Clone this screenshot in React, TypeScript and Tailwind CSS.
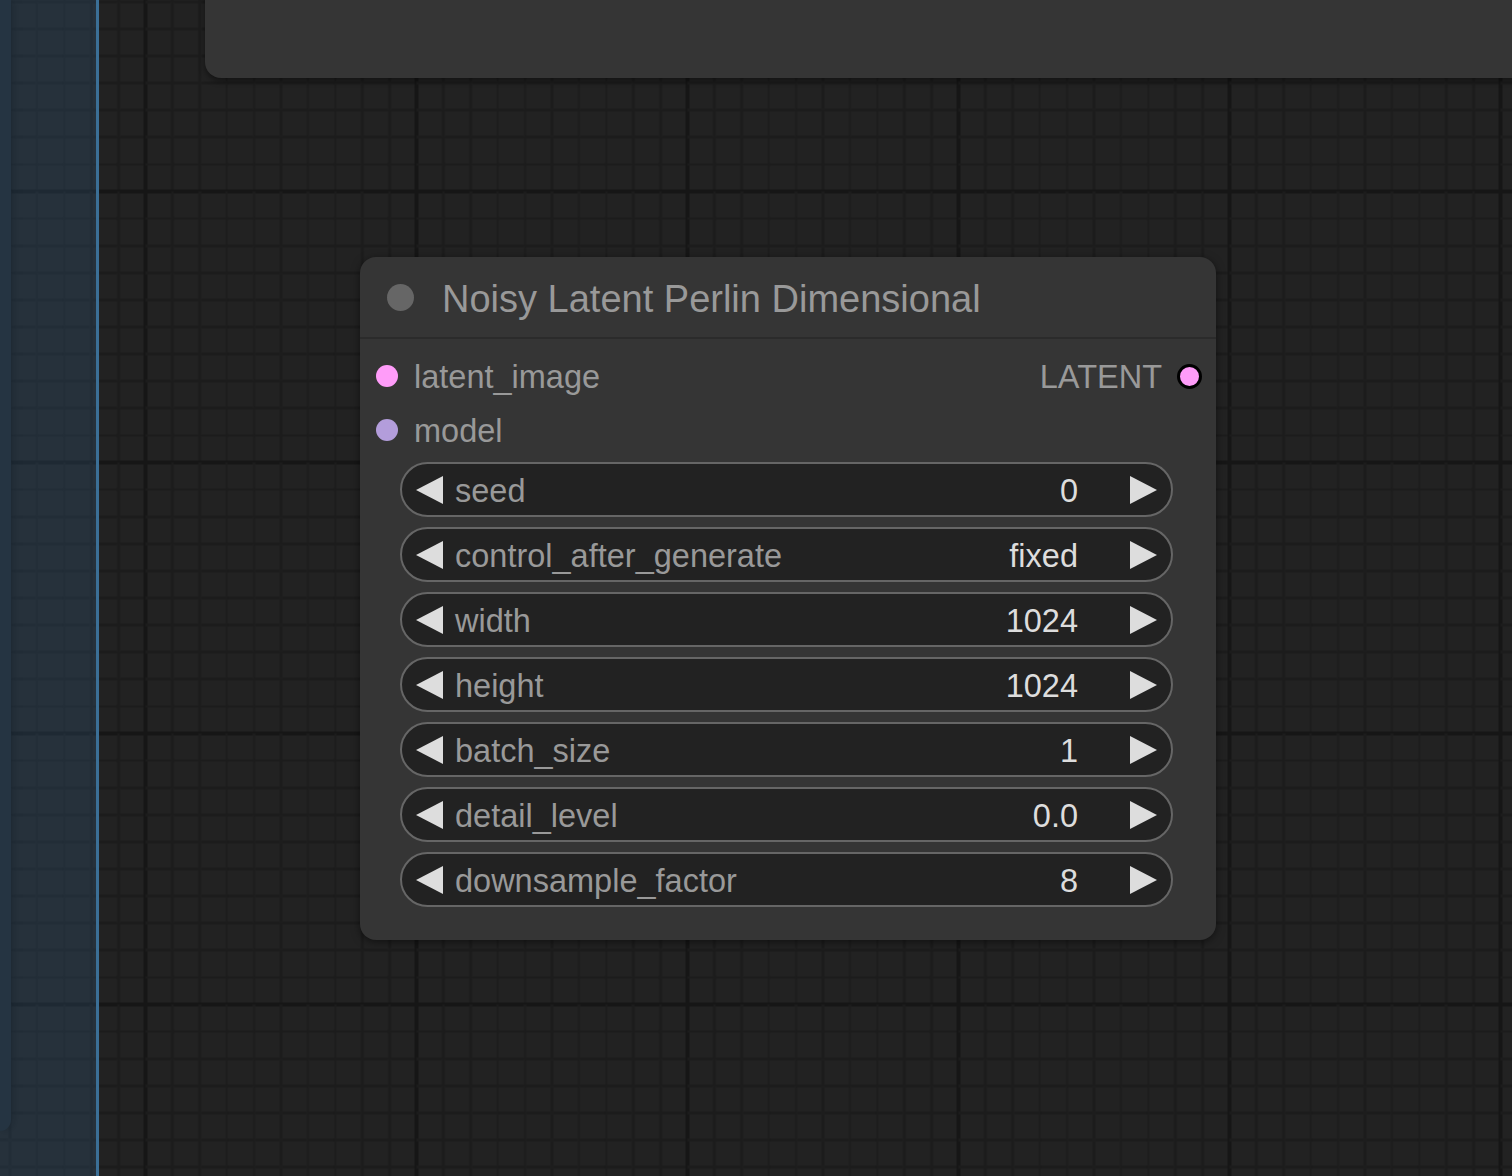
import React from "react";

const font = { fontFamily: '"Liberation Sans", Arial, sans-serif' };

type Widget = { label: string; value: string };

const widgets: Widget[] = [
  { label: "seed", value: "0" },
  { label: "control_after_generate", value: "fixed" },
  { label: "width", value: "1024" },
  { label: "height", value: "1024" },
  { label: "batch_size", value: "1" },
  { label: "detail_level", value: "0.0" },
  { label: "downsample_factor", value: "8" },
];

// canvas background grid (minor every ~27px, major every 10 cells)
const Grid = () => (
  <svg className="absolute inset-0" width="1512" height="1176">
    <defs>
      <filter id="soft">
        <feGaussianBlur stdDeviation="0.7" />
      </filter>
      <pattern
        id="grid"
        patternUnits="userSpaceOnUse"
        x="145.5"
        y="191.5"
        width="271"
        height="271"
      >
        <rect width="271" height="271" fill="#222222" />
        <g filter="url(#soft)">
          {Array.from({ length: 11 }).map((_, i) => (
            <g key={i}>
              <line x1={i * 27.1} y1="-5" x2={i * 27.1} y2="276" stroke={i % 10 === 0 ? "#181818" : "#1d1d1d"} strokeWidth={i % 10 === 0 ? 4 : 2.5} />
              <line x1="-5" y1={i * 27.1} x2="276" y2={i * 27.1} stroke={i % 10 === 0 ? "#181818" : "#1d1d1d"} strokeWidth={i % 10 === 0 ? 4 : 2.5} />
            </g>
          ))}
        </g>
      </pattern>
    </defs>
    <rect width="1512" height="1176" fill="url(#grid)" />
  </svg>
);

const Arrow = ({ dir }: { dir: "left" | "right" }) => (
  <svg width="27" height="28" viewBox="0 0 27 28" className="shrink-0">
    {dir === "left" ? (
      <polygon points="27,0 27,28 0,14" fill="#dddddd" />
    ) : (
      <polygon points="0,0 0,28 27,14" fill="#dddddd" />
    )}
  </svg>
);

const NumberWidget = ({ label, value }: Widget) => (
  <div className="flex items-center h-[55px] w-[773px] rounded-full border-[2.5px] border-[#666666] bg-[#222222] pl-[14px] pr-[14px]">
    <Arrow dir="left" />
    <span className="ml-[12px] flex-1 text-[32.5px] text-[#999999] leading-none pt-[3px]">{label}</span>
    <span className="text-[32.5px] text-[#dddddd] leading-none pt-[3px]">{value}</span>
    <span className="w-[52px]" />
    <Arrow dir="right" />
  </div>
);

export default function App() {
  return (
    <div className="relative w-[1512px] h-[1176px] overflow-hidden bg-[#222222]" style={font}>
      <Grid />

      {/* node above, mostly off screen */}
      <div className="absolute left-[205px] top-[-40px] w-[1400px] h-[118px] rounded-[16px] bg-[#353535] shadow-[0_3px_6px_rgba(0,0,0,0.45)]" />

      {/* Noisy Latent Perlin Dimensional node */}
      <div className="absolute left-[360px] top-[257px] w-[856px] h-[683px] rounded-[16px] bg-[#353535] shadow-[0_2px_8px_rgba(0,0,0,0.5)] flex flex-col">
        <div className="flex items-center h-[82px] pl-[27px] border-b-2 border-[#2b2b2b]">
          <div className="w-[27px] h-[27px] rounded-full bg-[#666666]" />
          <span className="ml-[28px] text-[38px] text-[#999999] leading-none pt-[4px]">
            Noisy Latent Perlin Dimensional
          </span>
        </div>

        <div className="flex items-center h-[54px] mt-[10px] pl-[16px] pr-[14px]">
          <div className="w-[22px] h-[22px] rounded-full bg-[#ff9cf9]" />
          <span className="ml-[16px] flex-1 text-[32.5px] text-[#999999] leading-none pt-[3px]">latent_image</span>
          <span className="text-[32.5px] text-[#999999] leading-none pt-[3px]">LATENT</span>
          <div className="ml-[15px] w-[25px] h-[25px] rounded-full bg-[#ff9cf9] border-[3px] border-black" />
        </div>

        <div className="flex items-center h-[54px] pl-[16px]">
          <div className="w-[22px] h-[22px] rounded-full bg-[#b39ddb]" />
          <span className="ml-[16px] text-[32.5px] text-[#999999] leading-none pt-[3px]">model</span>
        </div>

        <div className="flex flex-col gap-[10px] mt-[5px] pl-[40px]">
          {widgets.map((w) => (
            <NumberWidget key={w.label} label={w.label} value={w.value} />
          ))}
        </div>
      </div>

      {/* left sidebar edge */}
      <div className="absolute left-0 top-0 w-[11px] h-[1131px] rounded-br-[14px] bg-[#20262b] shadow-[2px_0_8px_rgba(0,0,0,0.35)]" />
      <div className="absolute left-0 top-0 w-[97px] h-full bg-[rgba(50,85,120,0.3)]" />
      <div className="absolute left-[96px] top-0 w-[3px] h-full bg-[#3b6f96]" />
    </div>
  );
}
